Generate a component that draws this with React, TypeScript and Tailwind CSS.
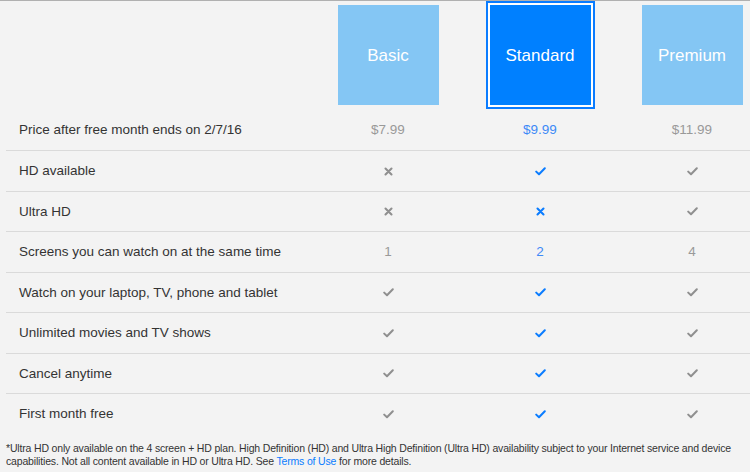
import React from "react";

type Cell = { kind: "check" | "x" | "text"; value?: string };

const Check = ({ blue }: { blue?: boolean }) => (
  <svg width="11" height="9" viewBox="0 0 11 9" className="block">
    <path d="M1.2 4.6 L4 7.3 L9.8 1.3" fill="none" stroke={blue ? "#0a7cff" : "#8f8f8f"} strokeWidth="2" strokeLinecap="round" strokeLinejoin="round" />
  </svg>
);

const Cross = ({ blue }: { blue?: boolean }) => (
  <svg width="9" height="9" viewBox="0 0 9 9" className="block">
    <path d="M1.5 1.5 L7.5 7.5 M7.5 1.5 L1.5 7.5" fill="none" stroke={blue ? "#0a7cff" : "#8f8f8f"} strokeWidth="2.1" strokeLinecap="round" />
  </svg>
);

const rows: { label: string; cells: Cell[]; h: string }[] = [
  { label: "Price after free month ends on 2/7/16", cells: [{ kind: "text", value: "$7.99" }, { kind: "text", value: "$9.99" }, { kind: "text", value: "$11.99" }], h: "h-[41px] border-b border-[#dadada]" },
  { label: "HD available", cells: [{ kind: "x" }, { kind: "check" }, { kind: "check" }], h: "h-[41px] border-b border-[#dadada]" },
  { label: "Ultra HD", cells: [{ kind: "x" }, { kind: "x" }, { kind: "check" }], h: "h-[40px] border-b border-[#dadada]" },
  { label: "Screens you can watch on at the same time", cells: [{ kind: "text", value: "1" }, { kind: "text", value: "2" }, { kind: "text", value: "4" }], h: "h-[41px] border-b border-[#dadada]" },
  { label: "Watch on your laptop, TV, phone and tablet", cells: [{ kind: "check" }, { kind: "check" }, { kind: "check" }], h: "h-[40px] border-b border-[#dadada]" },
  { label: "Unlimited movies and TV shows", cells: [{ kind: "check" }, { kind: "check" }, { kind: "check" }], h: "h-[41px] border-b border-[#dadada]" },
  { label: "Cancel anytime", cells: [{ kind: "check" }, { kind: "check" }, { kind: "check" }], h: "h-[40px] border-b border-[#dadada]" },
  { label: "First month free", cells: [{ kind: "check" }, { kind: "check" }, { kind: "check" }], h: "h-[40px]" },
];

export default function App() {
  return (
    <div className="w-[750px] h-[472px] overflow-hidden bg-[#f3f3f3] border-t border-[#b0b0b0] font-['Liberation_Sans',Arial,sans-serif]">
      <div className="w-[762px] ml-[6px]">
        <div className="grid grid-cols-[306px_152px_152px_152px] h-[109px]">
          <div />
          <div className="flex justify-center pt-[4px]">
            <div className="w-[101px] h-[100px] bg-[#84c6f4] flex items-center justify-center pt-[2px] text-white text-[17px]">Basic</div>
          </div>
          <div className="flex justify-center">
            <div className="border-2 border-[#0a7cff] bg-white p-[2px] h-[108px]">
              <div className="w-[101px] h-[100px] bg-[#0080ff] flex items-center justify-center pt-[2px] text-white text-[17px]">Standard</div>
            </div>
          </div>
          <div className="flex justify-center pt-[4px]">
            <div className="w-[101px] h-[100px] bg-[#84c6f4] flex items-center justify-center pt-[2px] text-white text-[17px]">Premium</div>
          </div>
        </div>
        {rows.map((r, i) => (
          <div key={i} className={"grid grid-cols-[306px_152px_152px_152px] items-center " + r.h}>
            <div className="pl-[13px] pt-[1px] text-[13.5px] text-[#333333]">{r.label}</div>
            {r.cells.map((c, j) => (
              <div key={j} className="flex justify-center items-center">
                {c.kind === "check" && <Check blue={j === 1} />}
                {c.kind === "x" && <Cross blue={j === 1} />}
                {c.kind === "text" && (
                  <span className={j === 1 ? "text-[13.5px] text-[#3d8af7]" : "text-[13.5px] text-[#999999]"}>{c.value}</span>
                )}
              </div>
            ))}
          </div>
        ))}
        <p className="w-[744px] pt-[8px] text-[10.5px] leading-[13px] tracking-[-0.17px] text-[#333333]">
          *Ultra HD only available on the 4 screen + HD plan. High Definition (HD) and Ultra High Definition (Ultra HD) availability subject to your Internet service and device capabilities. Not all content available in HD or Ultra HD. See <span className="text-[#0a7cff]">Terms of Use</span> for more details.
        </p>
      </div>
    </div>
  );
}
